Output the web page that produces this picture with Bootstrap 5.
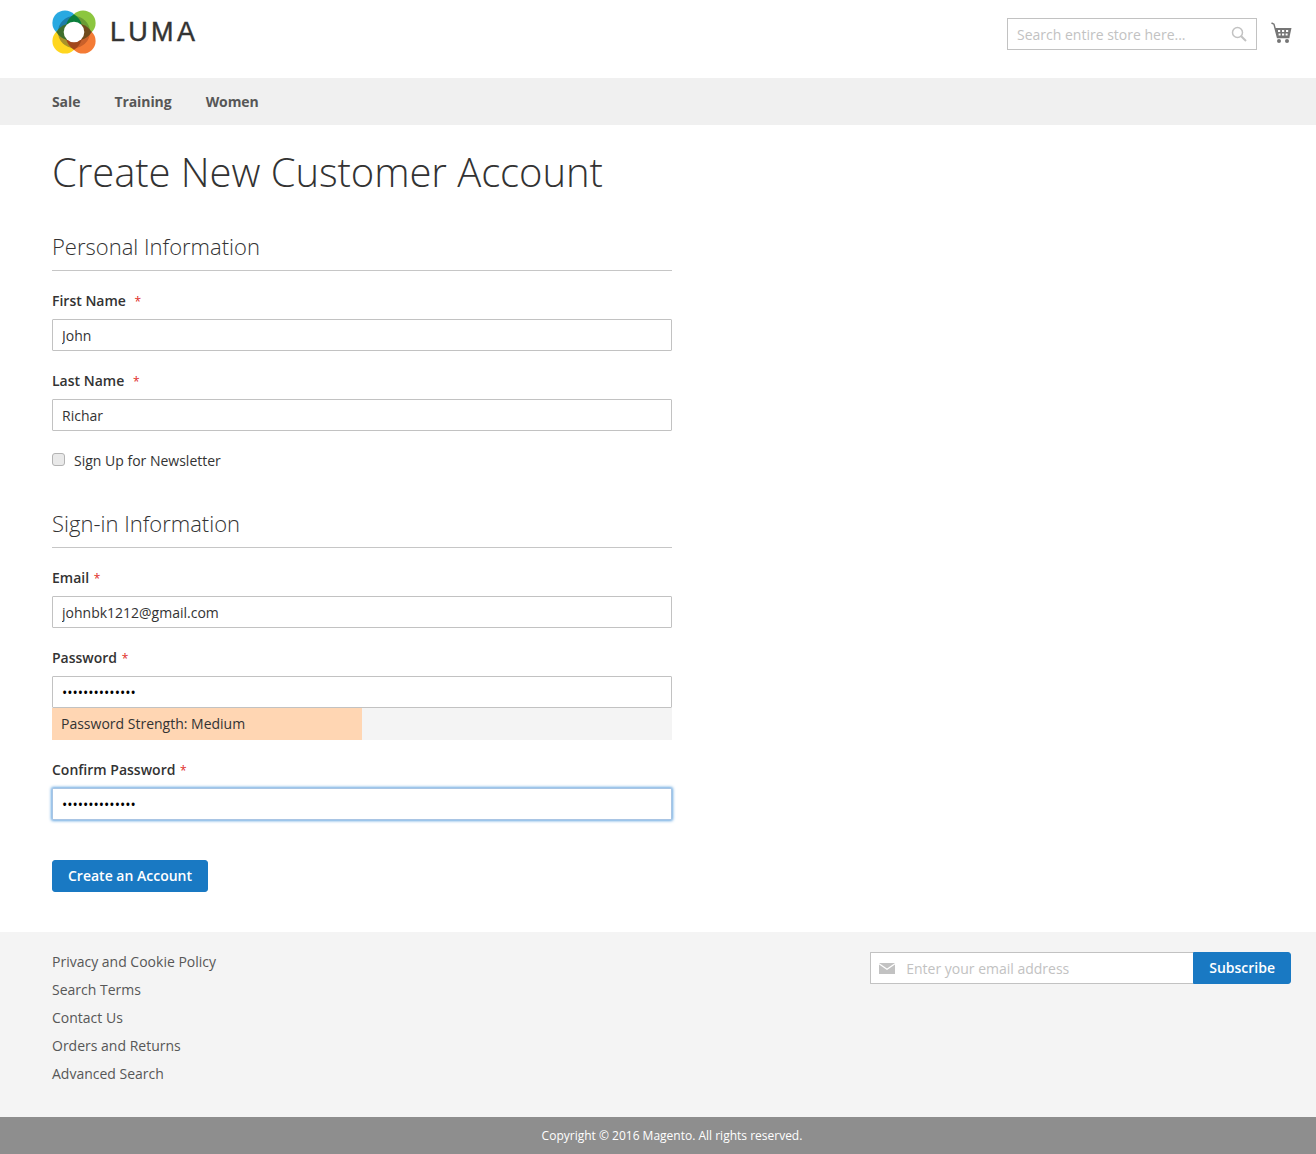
<!DOCTYPE html>
<html lang="en">
<head>
<meta charset="utf-8">
<title>Create New Customer Account</title>
<link href="https://cdn.jsdelivr.net/npm/bootstrap@5.3.0/dist/css/bootstrap.min.css" rel="stylesheet">
<style>
html,body{height:100%}
body{font-family:"Open Sans","Liberation Sans",sans-serif;font-size:14px;color:#333;line-height:20px;background:#fff}
.site-head{height:78px;padding:10px 23px 0 52px}
.logo-word{font-family:"Liberation Sans","Open Sans",sans-serif;font-size:27px;letter-spacing:3.3px;color:#333;line-height:44px;margin-left:14px;-webkit-text-stroke:.4px #333}
.search-box{width:250px;height:32px;border:1px solid #c2c2c2;margin-top:8px;padding:0 9px;background:#fff}
.search-box input{border:0;outline:0;flex:1;min-width:0;padding:1px 0 0;font-size:14px;color:#333}
.search-box input::placeholder,.news-box input::placeholder{color:#c2c2c2;opacity:1}
.cart-icon{margin-left:14px;margin-top:12px}
.site-nav{height:47px;background:#f0f0f0;padding-left:52px;gap:34.2px}
.site-nav a{font-weight:700;color:#575757;text-decoration:none;font-size:14px;letter-spacing:-.1px}
.page-main{padding:0 52px 40px}
.page-title{font-size:40px;font-weight:300;line-height:48px;margin:23px 0 0;color:#333;letter-spacing:-.07px}
.form-pane{width:620px}
.sect-title{font-size:22px;font-weight:300;line-height:28px;color:#333;margin:0;padding-bottom:10px;border-bottom:1px solid #c6c6c6}
.first-sect{margin-top:36px}
.second-sect{margin-top:38px}
.fld{margin-top:20px}
.fld-label{display:block;font-weight:600;font-size:14px;line-height:20px;margin:0 0 8px;color:#333}
.req{color:#e02b27;font-weight:400;font-size:12px;margin-left:1px;line-height:1}
.req-wide{margin-left:5px}
.fld-input{display:block;width:100%;height:32px;border:1px solid #c2c2c2;border-radius:1px;padding:0 9px;font-size:14px;color:#333;outline:0;background:#fff;font-family:inherit}
.fld-input[type=password]{color:#000;font-family:"Open Sans",sans-serif;letter-spacing:0}
.fld-focus{border-color:#a9c5e4;box-shadow:0 0 3px 1px #68a8e0}
.news-check{margin-top:20px;height:20px;color:#333}
.news-check input{appearance:none;-webkit-appearance:none;width:13px;height:13px;margin:0 9px 0 0;position:relative;top:-2px;background:#e9e9e9;border:1px solid #b3b3b3;border-radius:3px}
.strength{height:32px;background:#f4f4f4;line-height:32px}
.strength-fill{width:50%;background:#ffd6b3;padding-left:9px;color:#333;white-space:nowrap;height:32px}
.btn-luma{background:#1979c3;border:1px solid #1979c3;color:#fff;font-weight:600;font-size:14px;line-height:18px;padding:6px 15px;border-radius:3px}
.btn-luma:hover{background:#006bb4;color:#fff;border-color:#006bb4}
.create-row{margin-top:40px}
.site-foot{background:#f4f4f4;height:185px;padding:20px 25px 0 52px}
.foot-links{list-style:none;margin:0;padding:0}
.foot-links li{height:28px;line-height:20px}
.foot-links a{color:#575757;text-decoration:none}
.news-box{width:323px;height:32px;border:1px solid #c2c2c2;border-right:0;background:#fff;padding-left:8px;border-radius:1px 0 0 1px}
.news-box input{border:0;outline:0;flex:1;min-width:0;padding:1px 0 0 11px;font-size:14px;color:#333}
.btn-sub{border-radius:0 3px 3px 0;height:32px;padding:6px 15px}
.copy-bar{background:#8e8e8e;color:#fff;height:37px;line-height:37px;font-size:12px;text-align:center;padding-left:28px}
</style>
</head>
<body>
<header class="site-head d-flex justify-content-between align-items-start">
  <a class="d-flex align-items-center text-decoration-none" href="#">
    <svg width="44" height="44" viewBox="0 0 44 44" aria-hidden="true">
      <circle cx="13" cy="13" r="12.600" fill="#29a9e1"/>
      <circle cx="31" cy="13" r="12.600" fill="#8cc63f"/>
      <circle cx="13" cy="31" r="12.600" fill="#ffd61f"/>
      <circle cx="31" cy="31" r="12.600" fill="#f47b35"/>
      <path d="M22 22V6A16 16 0 0 0 6 22z" fill="#1c7ca8"/>
      <path d="M22 22V6A16 16 0 0 1 38 22z" fill="#6a9c35"/>
      <path d="M22 22V38A16 16 0 0 0 38 22z" fill="#c9602a"/>
      <path d="M22 22V38A16 16 0 0 1 6 22z" fill="#a8922a"/>
      <path d="M22 4.200Q28 8 30 15H14Q16 8 22 4.200z" fill="#0b7f3c"/>
      <path d="M39.800 22Q36 28 29 30V14Q36 16 39.800 22z" fill="#6f4a1c"/>
      <path d="M22 39.800Q16 36 14 29H30Q28 36 22 39.800z" fill="#a2471c"/>
      <path d="M4.200 22Q8 16 15 14V30Q8 28 4.200 22z" fill="#3f6f2c"/>
      <circle cx="22" cy="22" r="10.300" fill="#fff"/>
    </svg>
    <span class="logo-word">LUMA</span>
  </a>
  <div class="d-flex align-items-start">
    <div class="search-box d-flex align-items-center">
      <input type="text" placeholder="Search entire store here..." aria-label="Search">
      <svg width="16" height="16" viewBox="0 0 16 16" fill="none" stroke="#c2c2c2" aria-hidden="true"><circle cx="6.500" cy="6.500" r="5" stroke-width="1.500"/><path d="M10.200 10.200 15 15" stroke-width="2"/></svg>
    </div>
    <svg class="cart-icon" width="22" height="22" viewBox="0 0 22 22" aria-hidden="true">
      <path d="M0.500 1 3 2.200 6.500 15.500h12" fill="none" stroke="#757575" stroke-width="1.400"/>
      <path d="M4 6H20.500L18.500 15H6.500z" fill="#757575"/>
      <path d="M7 8h2.200v2H7zM11 8h2.200v2H11zM15 8h2.200v2H15zM7.600 11.500h2v2h-2zM11 11.500h2.200v2H11zM14.600 11.500h2v2h-2z" fill="#fff"/>
      <circle cx="8" cy="19" r="2" fill="#757575"/><circle cx="16" cy="19" r="2" fill="#757575"/>
    </svg>
  </div>
</header>
<nav class="site-nav d-flex align-items-center">
  <a href="#">Sale</a><a href="#">Training</a><a href="#">Women</a>
</nav>
<main class="page-main">
  <h1 class="page-title">Create New Customer Account</h1>
  <form class="form-pane" onsubmit="return false">
    <h2 class="sect-title first-sect">Personal Information</h2>
    <div class="fld"><label class="fld-label" for="fn">First Name <span class="req req-wide">*</span></label><input class="fld-input" id="fn" value="John"></div>
    <div class="fld"><label class="fld-label" for="ln">Last Name <span class="req req-wide">*</span></label><input class="fld-input" id="ln" value="Richar"></div>
    <label class="news-check d-flex align-items-center"><input type="checkbox">Sign Up for Newsletter</label>
    <h2 class="sect-title second-sect">Sign-in Information</h2>
    <div class="fld"><label class="fld-label" for="em">Email <span class="req">*</span></label><input class="fld-input" id="em" value="johnbk1212@gmail.com"></div>
    <div class="fld"><label class="fld-label" for="pw">Password <span class="req">*</span></label><input class="fld-input" id="pw" type="password" value="johnbk12121212">
      <div class="strength"><div class="strength-fill">Password Strength: Medium</div></div></div>
    <div class="fld"><label class="fld-label" for="cp">Confirm Password <span class="req">*</span></label><input class="fld-input fld-focus" id="cp" type="password" value="johnbk12121212"></div>
    <div class="create-row"><button class="btn btn-luma" type="submit">Create an Account</button></div>
  </form>
</main>
<footer class="site-foot d-flex justify-content-between align-items-start">
  <ul class="foot-links">
    <li><a href="#">Privacy and Cookie Policy</a></li>
    <li><a href="#">Search Terms</a></li>
    <li><a href="#">Contact Us</a></li>
    <li><a href="#">Orders and Returns</a></li>
    <li><a href="#">Advanced Search</a></li>
  </ul>
  <form class="d-flex" onsubmit="return false">
    <div class="news-box d-flex align-items-center">
      <svg width="16" height="11" viewBox="0 0 16 11" aria-hidden="true"><path d="M0 0h16L8 5.500z" fill="#c2c2c2"/><path d="M0 1.500v9.500h16V1.500L8 7z" fill="#c2c2c2"/></svg>
      <input type="email" placeholder="Enter your email address" aria-label="Email">
    </div>
    <button class="btn btn-luma btn-sub" type="submit">Subscribe</button>
  </form>
</footer>
<div class="copy-bar">Copyright © 2016 Magento. All rights reserved.</div>
</body>
</html>
